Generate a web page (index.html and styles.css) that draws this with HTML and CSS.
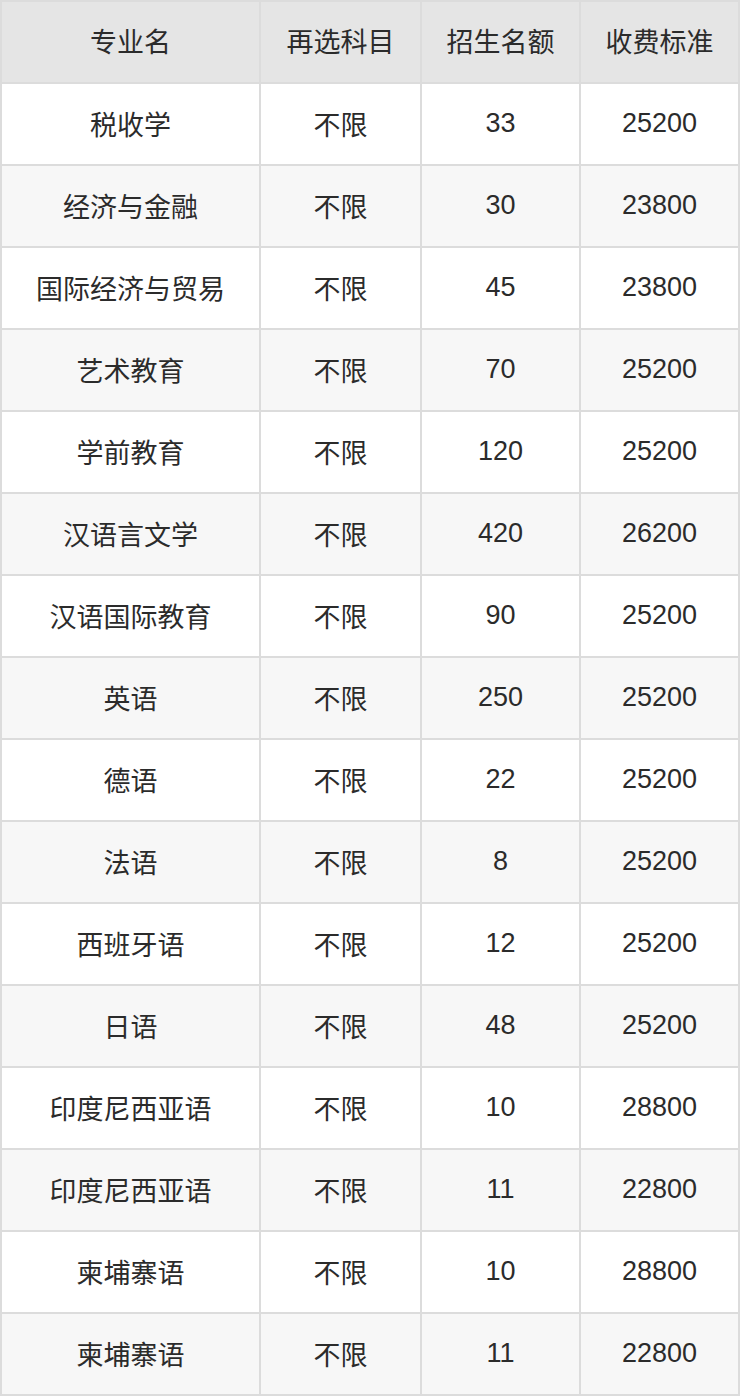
FILE: index.html
```html
<!DOCTYPE html>
<html lang="zh">
<head>
<meta charset="utf-8">
<title>专业招生</title>
<link rel="stylesheet" href="styles.css">
</head>
<body>
<div class="tbl">
<div class="row head"><div class="cell">专业名</div><div class="cell">再选科目</div><div class="cell">招生名额</div><div class="cell">收费标准</div></div>
<div class="row"><div class="cell">税收学</div><div class="cell">不限</div><div class="cell">33</div><div class="cell">25200</div></div>
<div class="row alt"><div class="cell">经济与金融</div><div class="cell">不限</div><div class="cell">30</div><div class="cell">23800</div></div>
<div class="row"><div class="cell">国际经济与贸易</div><div class="cell">不限</div><div class="cell">45</div><div class="cell">23800</div></div>
<div class="row alt"><div class="cell">艺术教育</div><div class="cell">不限</div><div class="cell">70</div><div class="cell">25200</div></div>
<div class="row"><div class="cell">学前教育</div><div class="cell">不限</div><div class="cell">120</div><div class="cell">25200</div></div>
<div class="row alt"><div class="cell">汉语言文学</div><div class="cell">不限</div><div class="cell">420</div><div class="cell">26200</div></div>
<div class="row"><div class="cell">汉语国际教育</div><div class="cell">不限</div><div class="cell">90</div><div class="cell">25200</div></div>
<div class="row alt"><div class="cell">英语</div><div class="cell">不限</div><div class="cell">250</div><div class="cell">25200</div></div>
<div class="row"><div class="cell">德语</div><div class="cell">不限</div><div class="cell">22</div><div class="cell">25200</div></div>
<div class="row alt"><div class="cell">法语</div><div class="cell">不限</div><div class="cell">8</div><div class="cell">25200</div></div>
<div class="row"><div class="cell">西班牙语</div><div class="cell">不限</div><div class="cell">12</div><div class="cell">25200</div></div>
<div class="row alt"><div class="cell">日语</div><div class="cell">不限</div><div class="cell">48</div><div class="cell">25200</div></div>
<div class="row"><div class="cell">印度尼西亚语</div><div class="cell">不限</div><div class="cell">10</div><div class="cell">28800</div></div>
<div class="row alt"><div class="cell">印度尼西亚语</div><div class="cell">不限</div><div class="cell">11</div><div class="cell">22800</div></div>
<div class="row"><div class="cell">柬埔寨语</div><div class="cell">不限</div><div class="cell">10</div><div class="cell">28800</div></div>
<div class="row alt"><div class="cell">柬埔寨语</div><div class="cell">不限</div><div class="cell">11</div><div class="cell">22800</div></div>
</div>
</body>
</html>
```

FILE: styles.css
```css
html, body {
  margin: 0;
  padding: 0;
  background: #ffffff;
}
.tbl {
  width: 740px;
  box-sizing: border-box;
  padding: 2px;
  background: #dcdcdc;
  display: flex;
  flex-direction: column;
  gap: 2px;
  font-family: "Liberation Sans", "Noto Sans CJK SC", sans-serif;
  font-size: 27px;
  color: #2b2b2b;
}
.row {
  display: grid;
  grid-template-columns: 257px 159px 157px 157px;
  column-gap: 2px;
}
.cell {
  height: 80px;
  box-sizing: border-box;
  padding-bottom: 2px;
  display: flex;
  align-items: center;
  justify-content: center;
  background: #ffffff;
  white-space: nowrap;
}
.head .cell {
  background: #e5e5e5;
  padding-bottom: 3px;
}
.alt .cell {
  background: #f7f7f7;
}
```
